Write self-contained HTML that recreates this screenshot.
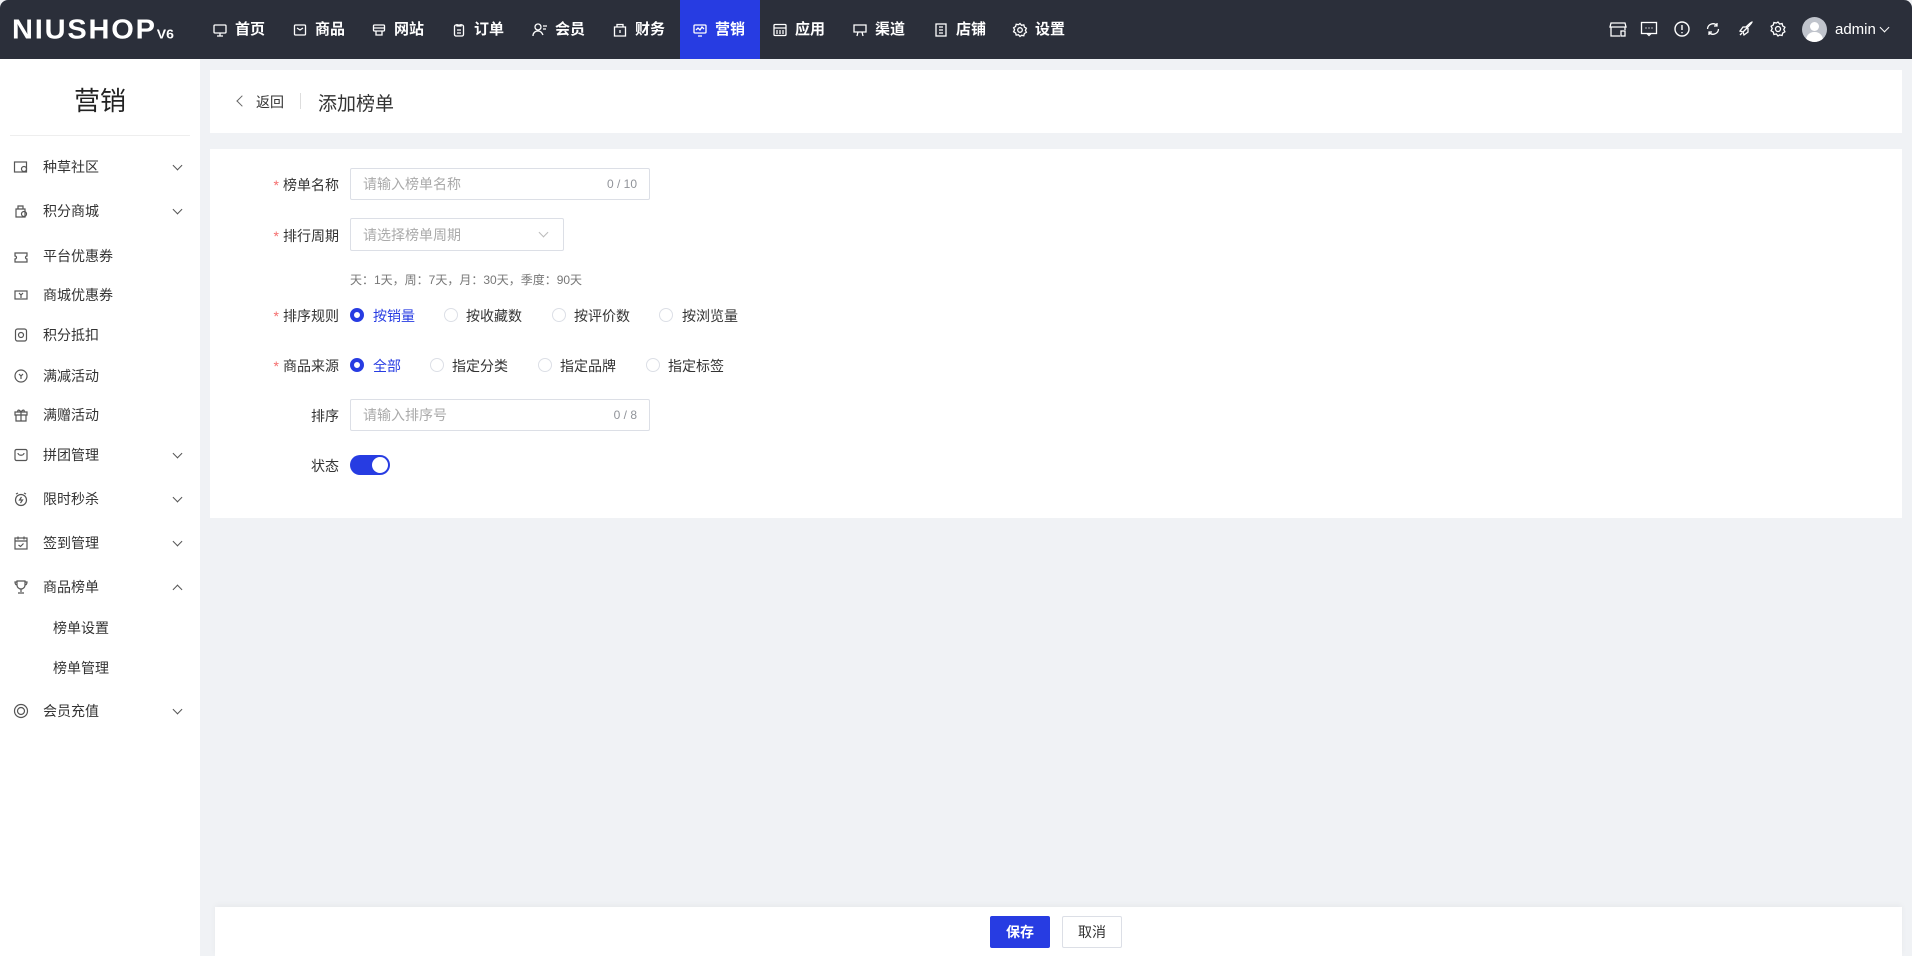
<!DOCTYPE html>
<html><head><meta charset="utf-8"><style>
*{box-sizing:border-box;margin:0;padding:0}
body{width:1912px;height:956px;overflow:hidden;background:#f0f2f5;font-family:"Liberation Sans","Noto Sans CJK SC",sans-serif;color:#333;font-size:14px;position:relative}
.nav{position:absolute;left:0;top:0;width:1912px;height:59px;background:#2b2f3a;border-radius:8px 8px 0 0;color:#fff}
.logo{position:absolute;left:12px;top:14px;font-size:29px;font-weight:bold;letter-spacing:1.8px;color:#fff;transform:scaleY(0.95)}
.logo small{font-size:14px;margin-left:0;letter-spacing:0}
.mi{position:absolute;top:0;height:59px;line-height:59px;font-size:15px;font-weight:bold;color:#fff;display:flex;align-items:center;gap:7px}
.mi svg{width:16px;height:16px}
.act{background:#273ce2}
.ric{position:absolute;top:20px;width:18px;height:18px}
.side{position:absolute;left:0;top:59px;width:200px;height:897px;background:#fff}
.side h2{position:absolute;left:0;width:200px;text-align:center;top:22px;font-size:26px;font-weight:normal;color:#222}
.side .ln{position:absolute;left:10px;right:10px;top:76px;height:1px;background:#eee}
.it{position:absolute;left:0;width:200px;font-size:14px;color:#333;display:flex;align-items:center}
.it svg{position:absolute;left:13px;width:16px;height:16px}
.it span{position:absolute;left:43px}
.it i{position:absolute;left:174px;width:7px;height:7px;border-right:1px solid #555;border-bottom:1px solid #555;transform:rotate(45deg);top:-5px}
.it i.up{transform:rotate(-135deg);top:-1px}
.card{position:absolute;background:#fff}
.lab{position:absolute;width:140px;left:199px;text-align:right;font-size:14px;color:#333}
.lab b{color:#f56c6c;font-weight:normal;margin-right:4px}
.inp{position:absolute;border:1px solid #dcdfe6;border-radius:2px;background:#fff;font-size:14px;color:#aaa;padding-left:12px;display:flex;align-items:center}
.inp em{position:absolute;right:12px;font-style:normal;font-size:12px;color:#909399}
.r{position:absolute;width:14px;height:14px;border:1px solid #dcdfe6;border-radius:50%}
.r.on{border:4px solid #273ce2;background:#fff}
.rt{position:absolute;font-size:14px;color:#333}
.rt.on{color:#273ce2}
</style></head><body>
<div class="nav">
 <div class="logo">NIUSHOP<small>V6</small></div>
 <div class="mi" style="left:212px"><svg viewBox="0 0 16 16" fill="none" stroke="#fff" stroke-width="1.3"><rect x="2" y="3" width="12" height="8" rx="1"/><path d="M8 11v3M5 14h6"/></svg>首页</div>
 <div class="mi" style="left:292px"><svg viewBox="0 0 16 16" fill="none" stroke="#fff" stroke-width="1.3"><rect x="2.5" y="3" width="11" height="10" rx="1"/><path d="M5 6l3 2 3-2"/></svg>商品</div>
 <div class="mi" style="left:371px"><svg viewBox="0 0 16 16" fill="none" stroke="#fff" stroke-width="1.3"><rect x="2.5" y="3" width="11" height="6" rx="1"/><path d="M5 9v4h6V9M2.5 6h11"/></svg>网站</div>
 <div class="mi" style="left:451px"><svg viewBox="0 0 16 16" fill="none" stroke="#fff" stroke-width="1.3"><rect x="3.5" y="3" width="9" height="11" rx="1.5"/><path d="M6 2v2h4V2M6 8h4M6 11h4"/></svg>订单</div>
 <div class="mi" style="left:532px"><svg viewBox="0 0 16 16" fill="none" stroke="#fff" stroke-width="1.3"><circle cx="6" cy="5" r="3"/><path d="M1 14c0-3 2-5 5-5s4 2 5 4M11 4h4M11 7h3"/></svg>会员</div>
 <div class="mi" style="left:612px"><svg viewBox="0 0 16 16" fill="none" stroke="#fff" stroke-width="1.3"><path d="M2.5 5h11v9h-11zM5 5V2.5h6V5M8 8v3"/></svg>财务</div>
 <div class="mi act" style="left:680px;width:80px;padding-left:12px"><svg viewBox="0 0 16 16" fill="none" stroke="#fff" stroke-width="1.3"><rect x="2" y="3" width="12" height="8" rx="1"/><path d="M4 8l2-2 2 2 2-3 2 2M6 14h4"/></svg>营销</div>
 <div class="mi" style="left:772px"><svg viewBox="0 0 16 16" fill="none" stroke="#fff" stroke-width="1.3"><rect x="2" y="2.5" width="12" height="11" rx="1"/><path d="M2 6h12M4 9h2M7 9h2M10 9h2M4 11h2M7 11h2M10 11h2"/></svg>应用</div>
 <div class="mi" style="left:852px"><svg viewBox="0 0 16 16" fill="none" stroke="#fff" stroke-width="1.3"><path d="M2 3h12v7H2zM6 10l-1 4M10 10l1 4"/></svg>渠道</div>
 <div class="mi" style="left:933px"><svg viewBox="0 0 16 16" fill="none" stroke="#fff" stroke-width="1.3"><rect x="3" y="2" width="10" height="12"/><path d="M6 5h4M6 8h4M6 11h4"/></svg>店铺</div>
 <div class="mi" style="left:1012px"><svg viewBox="0 0 16 16" fill="none" stroke="#fff" stroke-width="1.3"><circle cx="8" cy="8" r="2.3"/><path d="M8 1.5l1.5 1.8 2.3-.4.6 2.2 2 1.2-1 2 1 2-2 1.2-.6 2.2-2.3-.4L8 14.5l-1.5-1.8-2.3.4-.6-2.2-2-1.2 1-2-1-2 2-1.2.6-2.2 2.3.4z"/></svg>设置</div>
 <svg class="ric" style="left:1609px" viewBox="0 0 18 18" fill="none" stroke="#fff" stroke-width="1.3"><path d="M2 3h14l1 4H1zM2 7v9h9M16 7v3"/><rect x="12" y="11" width="4" height="5"/></svg>
 <svg class="ric" style="left:1640px" viewBox="0 0 18 18" fill="none" stroke="#fff" stroke-width="1.3"><rect x="1.5" y="2.5" width="15" height="11"/><path d="M7 13.5l2 2 2-2M5.5 8h1M8.5 8h1M11.5 8h1"/></svg>
 <svg class="ric" style="left:1673px" viewBox="0 0 18 18" fill="none" stroke="#fff" stroke-width="1.4"><circle cx="9" cy="9" r="7"/><path d="M9 5v5M9 12v1.2"/></svg>
 <svg class="ric" style="left:1704px" viewBox="0 0 18 18" fill="none" stroke="#fff" stroke-width="1.3"><path d="M3.5 9a5.5 5.5 0 0 1 9.5-3.5M14.5 9a5.5 5.5 0 0 1-9.5 3.5M13 3v3h-3M5 15v-3h3"/></svg>
 <svg class="ric" style="left:1737px" viewBox="0 0 18 18" fill="none" stroke="#fff" stroke-width="1.3"><path d="M6 12l-3-1 3-4h4M6 12l1 3 4-3V8M6 12L10 8c3-3 5-5 5-6-1 0-3 2-6 5"/><path d="M3 15l2-2"/></svg>
 <svg class="ric" style="left:1769px" viewBox="0 0 18 18" fill="none" stroke="#fff" stroke-width="1.3"><circle cx="9" cy="9" r="2.5"/><path d="M9 2l1.6 2 2.5-.5.6 2.4 2.2 1.3-1.1 2.3 1.1 2.3-2.2 1.3-.6 2.4-2.5-.5L9 16l-1.6-2-2.5.5-.6-2.4-2.2-1.3 1.1-2.3-1.1-2.3 2.2-1.3.6-2.4 2.5.5z"/></svg>
 <div style="position:absolute;left:1802px;top:17px;width:25px;height:25px;border-radius:50%;background:#c0c4cc;overflow:hidden"><div style="position:absolute;left:8px;top:5px;width:9px;height:9px;border-radius:50%;background:#fff"></div><div style="position:absolute;left:4px;top:15px;width:17px;height:12px;border-radius:8px 8px 0 0;background:#fff"></div></div>
 <div style="position:absolute;left:1835px;top:21px;font-size:15px;color:#fff">admin</div>
 <div style="position:absolute;left:1881px;top:24px;width:7px;height:7px;border-right:1px solid #fff;border-bottom:1px solid #fff;transform:rotate(45deg)"></div>
</div>

<div class="side">
 <h2>营销</h2><div class="ln"></div>
 <div class="it" style="top:108px"><svg viewBox="0 0 16 16" fill="none" stroke="#555" stroke-width="1.2"><rect x="1.5" y="3" width="12" height="10"/><circle cx="11" cy="10" r="2.5"/></svg><span>种草社区</span><i></i></div>
 <div class="it" style="top:152px"><svg viewBox="0 0 16 16" fill="none" stroke="#555" stroke-width="1.2"><path d="M3 6h9v8H3zM5 6V3h5v3"/><circle cx="11" cy="11" r="2.5"/></svg><span>积分商城</span><i></i></div>
 <div class="it" style="top:197px"><svg viewBox="0 0 16 16" fill="none" stroke="#555" stroke-width="1.2"><path d="M2 5h12v3a1.5 1.5 0 0 0 0 3v3H2v-3a1.5 1.5 0 0 0 0-3z"/></svg><span>平台优惠券</span></div>
 <div class="it" style="top:236px"><svg viewBox="0 0 16 16" fill="none" stroke="#555" stroke-width="1.2"><rect x="2" y="4" width="12" height="8"/><path d="M6 6l2 2 2-2M8 8v3"/></svg><span>商城优惠券</span></div>
 <div class="it" style="top:276px"><svg viewBox="0 0 16 16" fill="none" stroke="#555" stroke-width="1.2"><rect x="2.5" y="2" width="11" height="12" rx="2"/><circle cx="8" cy="8" r="2.5"/></svg><span>积分抵扣</span></div>
 <div class="it" style="top:317px"><svg viewBox="0 0 16 16" fill="none" stroke="#555" stroke-width="1.2"><circle cx="8" cy="8" r="6"/><path d="M6 6l2 2 2-2M8 8v3"/></svg><span>满减活动</span></div>
 <div class="it" style="top:356px"><svg viewBox="0 0 16 16" fill="none" stroke="#555" stroke-width="1.2"><path d="M2 5h12v3H2zM3 8v6h10V8M8 5v9M8 5c-2-3-4-2-3 0M8 5c2-3 4-2 3 0"/></svg><span>满赠活动</span></div>
 <div class="it" style="top:396px"><svg viewBox="0 0 16 16" fill="none" stroke="#555" stroke-width="1.2"><rect x="2" y="2.5" width="12" height="11" rx="1.5"/><path d="M5 6c0 3 6 3 6 0"/></svg><span>拼团管理</span><i></i></div>
 <div class="it" style="top:440px"><svg viewBox="0 0 16 16" fill="none" stroke="#555" stroke-width="1.2"><circle cx="8" cy="9" r="5.5"/><path d="M8.5 6l-2 3h3l-2 3M3 3l2-1M13 3l-2-1"/></svg><span>限时秒杀</span><i></i></div>
 <div class="it" style="top:484px"><svg viewBox="0 0 16 16" fill="none" stroke="#555" stroke-width="1.2"><rect x="2" y="3" width="12" height="11"/><path d="M5 1.5v3M11 1.5v3M2 6h12M5.5 10l2 1.5 3-3"/></svg><span>签到管理</span><i></i></div>
 <div class="it" style="top:528px"><svg viewBox="0 0 16 16" fill="none" stroke="#555" stroke-width="1.2"><path d="M4 2h8v4a4 4 0 0 1-8 0zM4 3H2c0 2 1 3 2 3M12 3h2c0 2-1 3-2 3M8 10v3M5 14h6"/></svg><span>商品榜单</span><i class="up"></i></div>
 <div class="it" style="top:569px"><span style="left:53px">榜单设置</span></div>
 <div class="it" style="top:609px"><span style="left:53px">榜单管理</span></div>
 <div class="it" style="top:652px"><svg viewBox="0 0 16 16" fill="none" stroke="#555" stroke-width="1.2"><circle cx="8" cy="8" r="6.5"/><circle cx="8" cy="8" r="3.5"/></svg><span>会员充值</span><i></i></div>
</div>

<div class="card" style="left:210px;top:70px;width:1692px;height:63px">
 <div style="position:absolute;left:28px;top:27px;width:8px;height:8px;border-left:1.3px solid #666;border-bottom:1.3px solid #666;transform:rotate(45deg)"></div>
 <div style="position:absolute;left:46px;top:22px;font-size:14px;color:#333">返回</div>
 <div style="position:absolute;left:90px;top:23px;width:1px;height:16px;background:#ddd"></div>
 <div style="position:absolute;left:108px;top:19px;font-size:19px;color:#333">添加榜单</div>
</div>

<div class="card" style="left:210px;top:149px;width:1692px;height:369px"></div>
<div class="lab" style="top:175px"><b>*</b>榜单名称</div>
<div class="inp" style="left:350px;top:168px;width:300px;height:32px">请输入榜单名称<em>0 / 10</em></div>
<div class="lab" style="top:226px"><b>*</b>排行周期</div>
<div class="inp" style="left:350px;top:218px;width:214px;height:33px">请选择榜单周期<span style="position:absolute;right:16px;top:10px;width:7px;height:7px;border-right:1px solid #bbb;border-bottom:1px solid #bbb;transform:rotate(45deg)"></span></div>
<div style="position:absolute;left:350px;top:271px;font-size:12px;color:#777">天：1天，周：7天，月：30天，季度：90天</div>
<div class="lab" style="top:306px"><b>*</b>排序规则</div>
<div class="r on" style="left:350px;top:308px"></div><div class="rt on" style="left:373px;top:306px">按销量</div>
<div class="r" style="left:444px;top:308px"></div><div class="rt" style="left:466px;top:306px">按收藏数</div>
<div class="r" style="left:552px;top:308px"></div><div class="rt" style="left:574px;top:306px">按评价数</div>
<div class="r" style="left:659px;top:308px"></div><div class="rt" style="left:682px;top:306px">按浏览量</div>
<div class="lab" style="top:356px"><b>*</b>商品来源</div>
<div class="r on" style="left:350px;top:358px"></div><div class="rt on" style="left:373px;top:356px">全部</div>
<div class="r" style="left:430px;top:358px"></div><div class="rt" style="left:452px;top:356px">指定分类</div>
<div class="r" style="left:538px;top:358px"></div><div class="rt" style="left:560px;top:356px">指定品牌</div>
<div class="r" style="left:646px;top:358px"></div><div class="rt" style="left:668px;top:356px">指定标签</div>
<div class="lab" style="top:406px">排序</div>
<div class="inp" style="left:350px;top:399px;width:300px;height:32px">请输入排序号<em>0 / 8</em></div>
<div class="lab" style="top:456px">状态</div>
<div style="position:absolute;left:350px;top:455px;width:40px;height:20px;border-radius:10px;background:#273ce2"><div style="position:absolute;right:2px;top:2px;width:16px;height:16px;border-radius:50%;background:#fff"></div></div>

<div class="card" style="left:215px;top:907px;width:1687px;height:49px;box-shadow:0 -2px 6px rgba(0,0,0,.04)">
 <div style="position:absolute;left:775px;top:9px;width:60px;height:32px;background:#273ce2;border-radius:2px;color:#fff;font-size:14px;font-weight:bold;text-align:center;line-height:32px">保存</div>
 <div style="position:absolute;left:847px;top:9px;width:60px;height:32px;border:1px solid #dcdfe6;border-radius:2px;color:#333;font-size:14px;text-align:center;line-height:30px">取消</div>
</div>
</body></html>
